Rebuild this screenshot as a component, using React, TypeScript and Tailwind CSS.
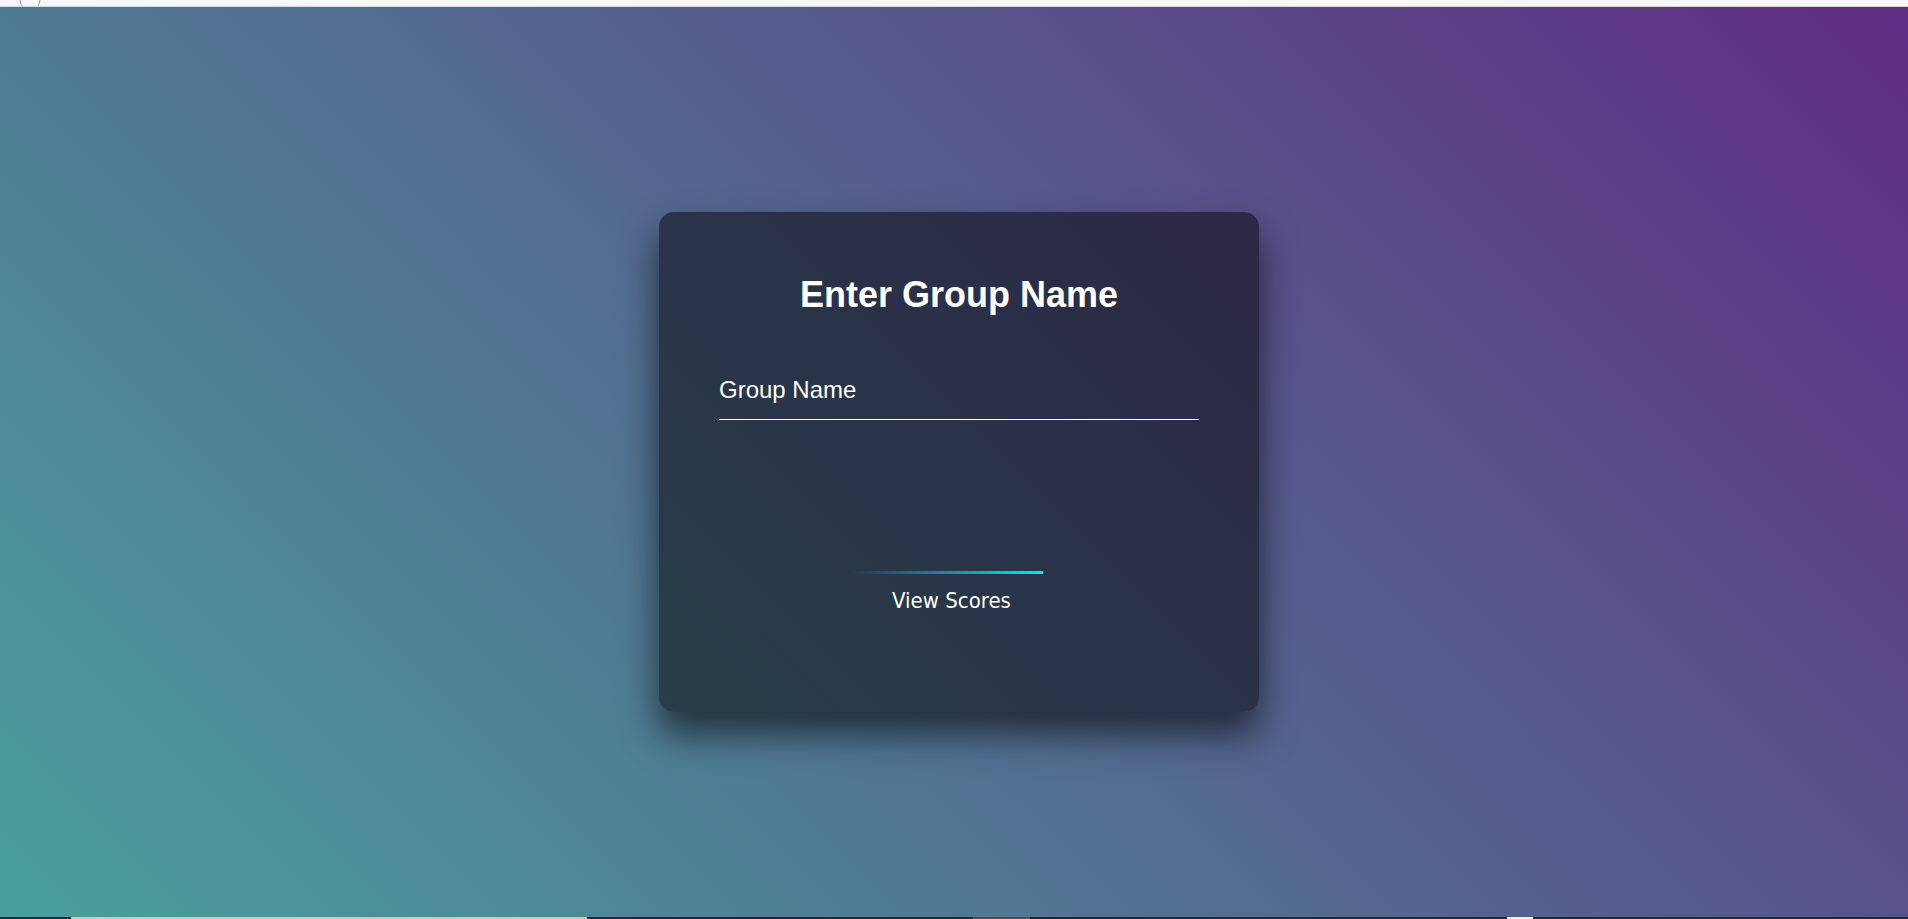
import { useState } from 'react';

export default function App() {
  const [groupName, setGroupName] = useState('');

  return (
    <div className="h-screen flex flex-col overflow-hidden font-['Liberation_Sans',Arial,sans-serif]">
      {/* Browser strip */}
      <div className="h-[7px] shrink-0 bg-[#f7f7f7] border-b border-[#d6d6d6] pl-[19px] overflow-hidden">
        <svg width="22" height="6" viewBox="0 0 22 6" className="block">
          <path d="M1 0 A10 10 0 0 0 21 0" fill="none" stroke="#9a9a9a" strokeWidth="1" />
        </svg>
      </div>

      <main className="flex-1 flex items-center justify-center pl-[10px] bg-[linear-gradient(45deg,#49a09d,#5f2c82)]">
        <div className="w-[600px] h-[500px] p-[60px] rounded-[15px] bg-black/50 shadow-[0_22px_37px_rgba(0,0,0,0.6)] flex flex-col">
          <h2 className="text-white text-[36px] leading-[46px] font-bold text-center mb-[43px]">
            Enter Group Name
          </h2>

          {/* Input */}
          <div className="relative">
            <input
              type="text"
              value={groupName}
              onChange={(e) => setGroupName(e.target.value)}
              className="block w-full h-[59px] py-[15px] bg-transparent text-white text-[24px] leading-[28px] border-b border-white outline-none"
            />
            {!groupName && (
              <label className="absolute left-0 top-0 py-[15px] text-white text-[24px] leading-[28px] pointer-events-none">
                Group Name
              </label>
            )}
          </div>

          {/* Button */}
          <button className="self-start ml-[132px] mt-[151px] flex flex-col items-start text-left cursor-pointer">
            <div className="w-[192px] h-[3px] bg-[linear-gradient(90deg,transparent,#03e9f4)]" />
            <span className="ml-[41px] mt-[13px] text-white text-[22px] leading-[28px] font-['DejaVu_Sans_Condensed','Noto_Sans',sans-serif]">
              View Scores
            </span>
          </button>
        </div>
      </main>

      {/* Taskbar strip */}
      <div className="h-[2px] shrink-0 flex bg-[#1c2a3c]">
        <div className="w-[71px]" />
        <div className="w-[516px] bg-[#c8c8c8]" />
        <div className="w-[386px]" />
        <div className="w-[57px] bg-[#4a4f5a]" />
        <div className="w-[477px]" />
        <div className="w-[26px] bg-[#f0f0f0]" />
      </div>
    </div>
  );
}
